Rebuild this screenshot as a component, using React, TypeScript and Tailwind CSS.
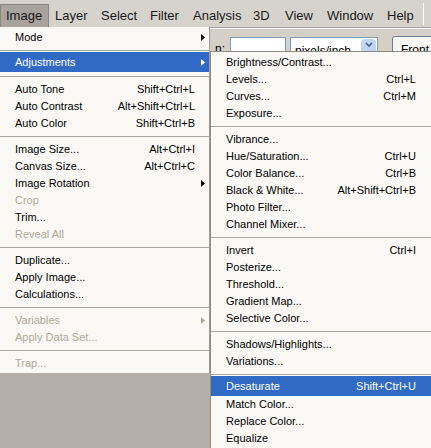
import React from "react";

// ─── MENU DATA ────────────────────────────────────────────────────────────────

type Entry =
  | { label: string; shortcut?: string; sub?: boolean; disabled?: boolean; active?: boolean }
  | "sep";

const imageMenu: Entry[] = [
  { label: "Mode", sub: true },
  "sep",
  { label: "Adjustments", sub: true, active: true },
  "sep",
  { label: "Auto Tone", shortcut: "Shift+Ctrl+L" },
  { label: "Auto Contrast", shortcut: "Alt+Shift+Ctrl+L" },
  { label: "Auto Color", shortcut: "Shift+Ctrl+B" },
  "sep",
  { label: "Image Size...", shortcut: "Alt+Ctrl+I" },
  { label: "Canvas Size...", shortcut: "Alt+Ctrl+C" },
  { label: "Image Rotation", sub: true },
  { label: "Crop", disabled: true },
  { label: "Trim..." },
  { label: "Reveal All", disabled: true },
  "sep",
  { label: "Duplicate..." },
  { label: "Apply Image..." },
  { label: "Calculations..." },
  "sep",
  { label: "Variables", sub: true, disabled: true },
  { label: "Apply Data Set...", disabled: true },
  "sep",
  { label: "Trap...", disabled: true },
];

const adjustMenu: Entry[] = [
  { label: "Brightness/Contrast..." },
  { label: "Levels...", shortcut: "Ctrl+L" },
  { label: "Curves...", shortcut: "Ctrl+M" },
  { label: "Exposure..." },
  "sep",
  { label: "Vibrance..." },
  { label: "Hue/Saturation...", shortcut: "Ctrl+U" },
  { label: "Color Balance...", shortcut: "Ctrl+B" },
  { label: "Black & White...", shortcut: "Alt+Shift+Ctrl+B" },
  { label: "Photo Filter..." },
  { label: "Channel Mixer..." },
  "sep",
  { label: "Invert", shortcut: "Ctrl+I" },
  { label: "Posterize..." },
  { label: "Threshold..." },
  { label: "Gradient Map..." },
  { label: "Selective Color..." },
  "sep",
  { label: "Shadows/Highlights..." },
  { label: "Variations..." },
  "sep",
  { label: "Desaturate", shortcut: "Shift+Ctrl+U", active: true },
  { label: "Match Color..." },
  { label: "Replace Color..." },
  { label: "Equalize" },
];

const menuBar = [
  { label: "Image", w: "w-[50px]" },
  { label: "Layer", w: "w-[46px]" },
  { label: "Select", w: "w-[49px]" },
  { label: "Filter", w: "w-[43px]" },
  { label: "Analysis", w: "w-[60px]" },
  { label: "3D", w: "w-[32px]" },
  { label: "View", w: "w-[42px]" },
  { label: "Window", w: "w-[60px]" },
  { label: "Help", w: "w-[36px]" },
];

// ─── PIECES ───────────────────────────────────────────────────────────────────

function Arrow({ color }: { color: string }) {
  return (
    <svg width="4" height="7" viewBox="0 0 4 7" className="ml-[6px]">
      <polygon points="0,0 4,3.5 0,7" fill={color} />
    </svg>
  );
}

function Rows({ items, arrows }: { items: Entry[]; arrows: boolean }) {
  return (
    <>
      {items.map((it, i) => {
        if (it === "sep") {
          return (
            <div key={i} className="h-[9px] pt-[4px]">
              <div className="h-px bg-[#a8a69f]" />
            </div>
          );
        }
        const text = it.active ? "text-white" : it.disabled ? "text-[#aca899]" : "text-black";
        return (
          <div
            key={i}
            className={`flex items-center pl-[15px] ${arrows ? "pr-0" : "pr-[15px]"} ${
              it.active ? "h-[20px] -mt-[3px] bg-[#316ac5]" : "h-[17px]"
            } ${text}`}
          >
            <span className="flex-1 whitespace-nowrap">{it.label}</span>
            {it.shortcut && <span className="whitespace-nowrap">{it.shortcut}</span>}
            {arrows && (
              <span className="w-[14px] flex items-center">
                {it.sub && <Arrow color={it.active ? "#ffffff" : it.disabled ? "#aca899" : "#000000"} />}
              </span>
            )}
          </div>
        );
      })}
    </>
  );
}

// ─── APP ──────────────────────────────────────────────────────────────────────

export default function App() {
  return (
    <div
      className="w-[431px] h-[448px] overflow-hidden bg-[#d6d3cd] flex flex-col"
      style={{ fontFamily: '"Liberation Sans", Arial, sans-serif' }}
    >
      {/* menu bar */}
      <div className="h-[27px] flex items-end shrink-0 text-[13px] text-[#1a1a1a]">
        {menuBar.map((m, i) =>
          i === 0 ? (
            <div
              key={m.label}
              className="w-[49px] mr-[6px] h-[23px] pl-[5px] flex items-center bg-[#a9a39d] border border-[#8c8680] border-b-0"
            >
              {m.label}
            </div>
          ) : (
            <div key={m.label} className={`${m.w} h-[23px] flex items-center`}>
              {m.label}
            </div>
          )
        )}
        <div className="h-[22px] w-px bg-[#a09c95] mb-[2px] border-r border-white" />
      </div>

      <div className="flex flex-1 min-h-0">
        {/* image menu */}
        <div className="w-[210px] flex flex-col shrink-0">
          <div className="bg-[#faf9f5] border-r border-[#9d9a93] pt-[2px] pb-px text-[11px] leading-none">
            <Rows items={imageMenu} arrows />
          </div>
          <div className="flex-1 bg-[#b5afa9]" />
        </div>

        {/* right side: options bar + adjustments submenu */}
        <div className="w-[221px] flex flex-col shrink-0">
          <div className="h-[2px] bg-[#a9a59e] border-b border-white" />
          <div className="h-[22px] overflow-hidden flex items-start pt-[8px] bg-[#d4d0c8] text-[12px] text-black">
            <span className="shrink-0 ml-[5px] w-[15px] pt-[3px]">n:</span>
            <div className="shrink-0 w-[56px] h-[20px] bg-white border border-[#7f9db9]" />
            <div className="shrink-0 ml-[4px] w-[88px] h-[20px] bg-white border border-[#7f9db9] flex items-start">
              <span className="flex-1 pl-[4px] pt-[4px] whitespace-nowrap overflow-hidden">pixels/inch</span>
              <div className="shrink-0 w-[15px] h-[16px] mt-px mr-px rounded-sm bg-[#c1d3fb] flex items-start justify-center pt-[3px]">
                <svg width="8" height="6" viewBox="0 0 8 6">
                  <polyline points="1,1 4,4 7,1" fill="none" stroke="#4d6185" strokeWidth="1.6" />
                </svg>
              </div>
            </div>
            <div className="shrink-0 ml-[14px] w-[60px] h-[21px] -mt-px rounded-[3px] bg-[#f7f7f4] border border-[#6d7d93] pl-[8px] pt-[4px] whitespace-nowrap">
              Front Image
            </div>
          </div>
          <div className="flex-1 bg-[#faf9f5] border-t border-l border-[#8e8b85] pt-[2px] text-[11px] leading-none">
            <Rows items={adjustMenu} arrows={false} />
          </div>
        </div>
      </div>
    </div>
  );
}
